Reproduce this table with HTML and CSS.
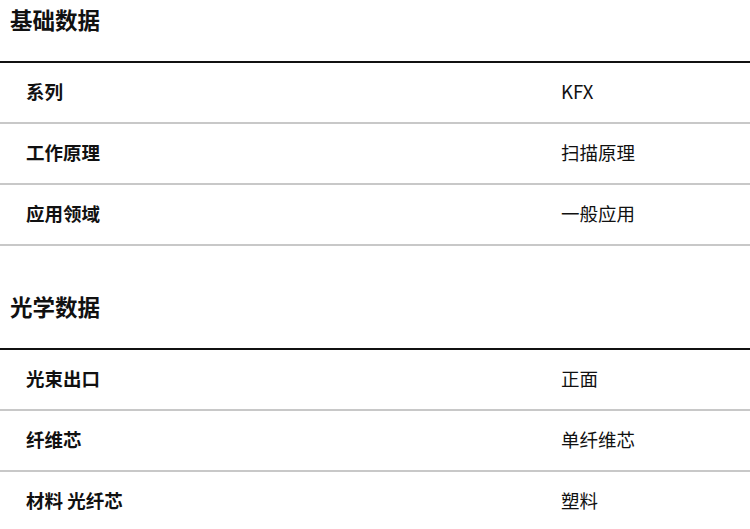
FILE: index.html
```html
<!DOCTYPE html>
<html lang="zh-CN">
<head>
<meta charset="utf-8">
<title>数据</title>
<link rel="stylesheet" href="styles.css">
</head>
<body>
<section class="group">
  <h2 class="group-title">基础数据</h2>
  <div class="table">
    <div class="row"><div class="label">系列</div><div class="value">KFX</div></div>
    <div class="row"><div class="label">工作原理</div><div class="value">扫描原理</div></div>
    <div class="row"><div class="label">应用领域</div><div class="value">一般应用</div></div>
  </div>
</section>
<section class="group">
  <h2 class="group-title">光学数据</h2>
  <div class="table">
    <div class="row"><div class="label">光束出口</div><div class="value">正面</div></div>
    <div class="row"><div class="label">纤维芯</div><div class="value">单纤维芯</div></div>
    <div class="row"><div class="label">材料 光纤芯</div><div class="value">塑料</div></div>
  </div>
</section>
</body>
</html>
```
FILE: styles.css
```css
html, body {
  margin: 0;
  padding: 0;
  background: #fff;
}
body {
  width: 750px;
  font-family: "Noto Sans CJK SC", "Noto Sans", "Liberation Sans", sans-serif;
  color: #111;
}
.group + .group {
  margin-top: 41px;
}
.group-title {
  margin: 0 0 23px 0;
  padding-left: 10px;
  font-size: 22.5px;
  line-height: 38px;
  font-weight: 700;
}
.table {
  border-top: 2px solid #111;
}
.row {
  display: grid;
  grid-template-columns: 561px 1fr;
  align-items: center;
  height: 56px;
  padding-bottom: 3px;
  border-bottom: 2px solid #c8c8c8;
  font-size: 18.5px;
}
.label {
  padding-left: 26px;
  font-weight: 700;
}
.value {
  font-weight: 400;
}
```
